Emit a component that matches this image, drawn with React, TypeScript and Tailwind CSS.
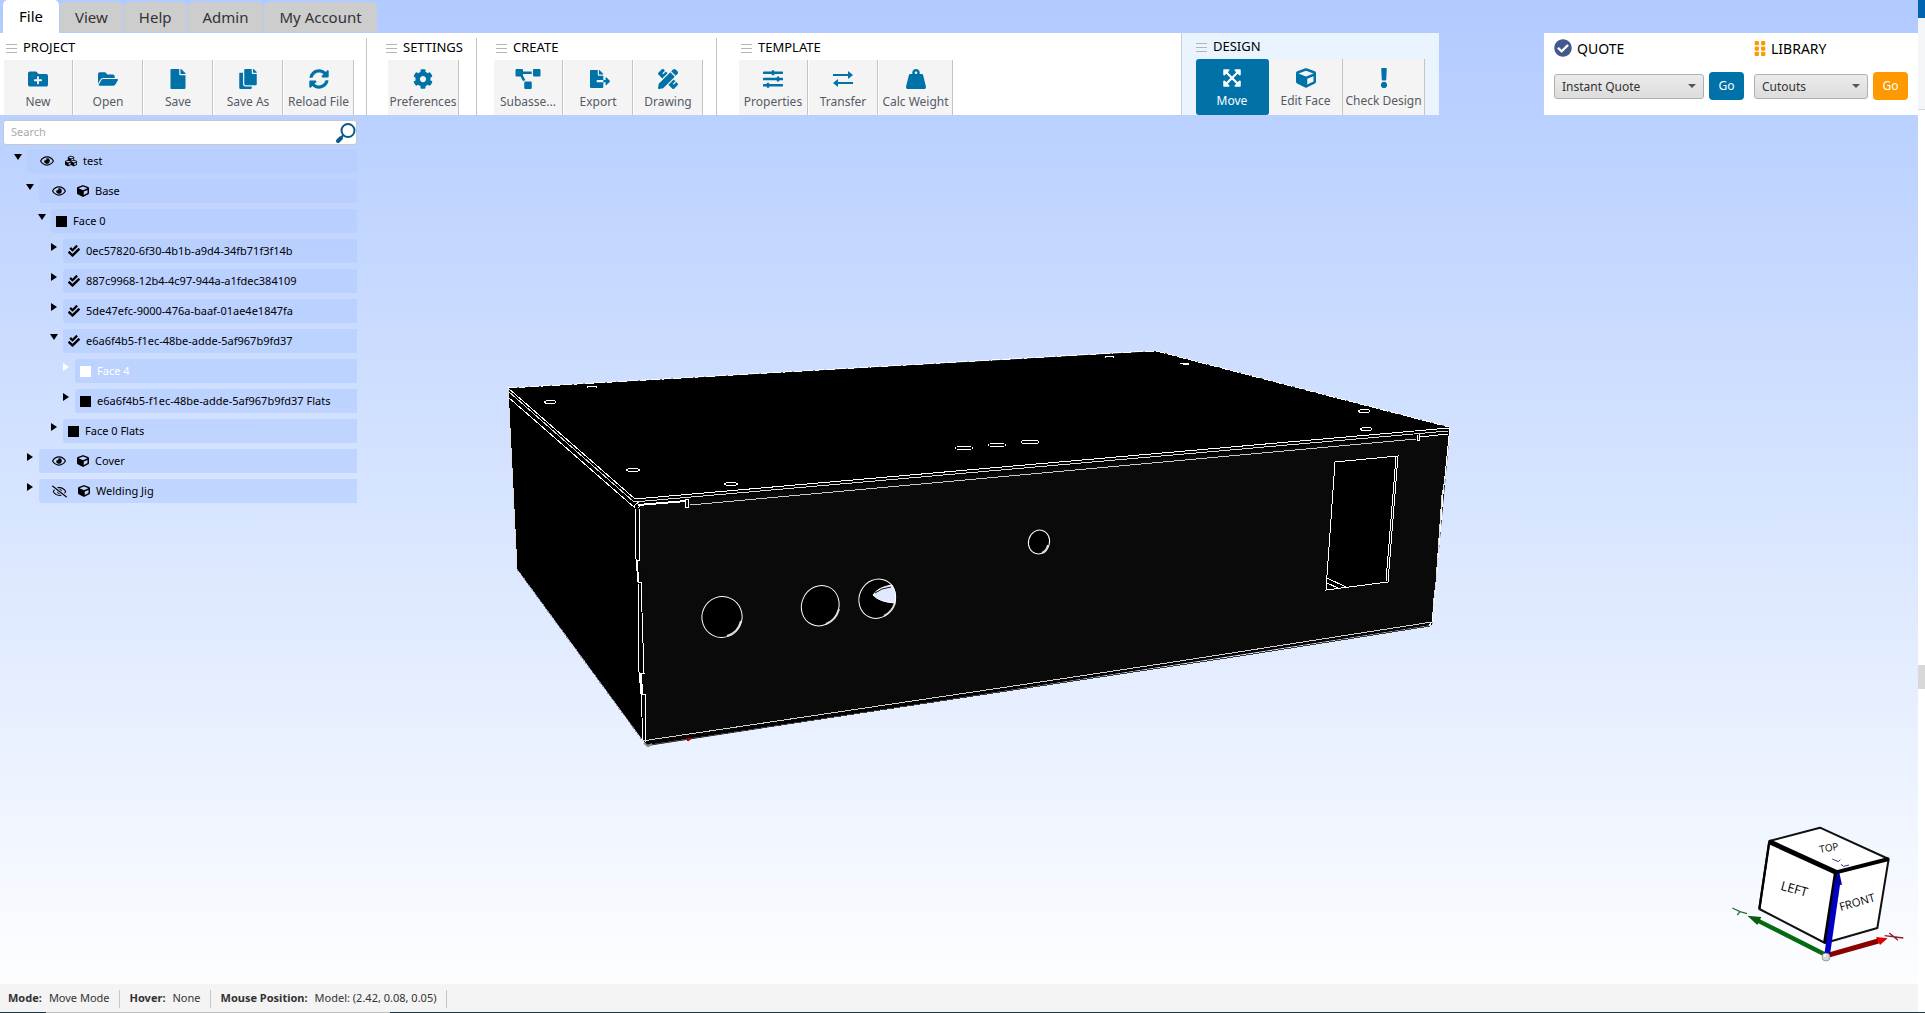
import { useState } from 'react';
import type { ReactNode } from 'react';
import type { IconType } from 'react-icons';
import {
  FaFolderPlus, FaFolderOpen, FaFile, FaCopy, FaSyncAlt, FaCog, FaProjectDiagram, FaFileExport,
  FaPencilRuler, FaSlidersH, FaWeightHanging, FaExpandArrowsAlt, FaCube, FaCubes, FaExclamation,
  FaRegEye, FaRegEyeSlash, FaSquareFull, FaCheckDouble, FaCheckCircle, FaGripVertical
} from 'react-icons/fa';

type Tool = { label: string; icon: ReactNode; wide?: string };

type Node = {
  id: number;
  label: string;
  indent: string;
  open?: boolean;
  eye?: 'on' | 'off';
  icon: IconType;
  selected?: boolean;
};

const TABS = ['File', 'View', 'Help', 'Admin', 'My Account'];

function TransferIcon() {
  return (
    <svg viewBox="0 0 20 20" className="size-5" fill="none" stroke="currentColor" strokeWidth="2">
      <path d="M0 6h17M20 14H3" />
      <path d="M15 2l5 4-5 4zM5 10l-5 4 5 4z" fill="currentColor" stroke="none" />
    </svg>
  );
}

const PROJECT: Tool[] = [
  { label: 'New', icon: <FaFolderPlus /> },
  { label: 'Open', icon: <FaFolderOpen /> },
  { label: 'Save', icon: <FaFile /> },
  { label: 'Save As', icon: <FaCopy /> },
  { label: 'Reload File', icon: <FaSyncAlt />, wide: 'w-[70px]' },
];

const SETTINGS: Tool[] = [
  { label: 'Preferences', icon: <FaCog />, wide: 'w-[71px]' },
];

const CREATE: Tool[] = [
  { label: 'Subasse...', icon: <FaProjectDiagram className="w-[26px]" /> },
  { label: 'Export', icon: <FaFileExport className="ml-1" /> },
  { label: 'Drawing', icon: <FaPencilRuler /> },
];

const TEMPLATE: Tool[] = [
  { label: 'Properties', icon: <FaSlidersH /> },
  { label: 'Transfer', icon: <TransferIcon /> },
  { label: 'Calc Weight', icon: <FaWeightHanging />, wide: 'w-[74px]' },
];

const NODES: Node[] = [
  { id: 1, label: 'test', indent: 'ml-0', open: true, eye: 'on', icon: FaCubes },
  { id: 2, label: 'Base', indent: 'ml-3', open: true, eye: 'on', icon: FaCube },
  { id: 3, label: 'Face 0', indent: 'ml-6', open: true, icon: FaSquareFull },
  { id: 4, label: '0ec57820-6f30-4b1b-a9d4-34fb71f3f14b', indent: 'ml-9', icon: FaCheckDouble },
  { id: 5, label: '887c9968-12b4-4c97-944a-a1fdec384109', indent: 'ml-9', icon: FaCheckDouble },
  { id: 6, label: '5de47efc-9000-476a-baaf-01ae4e1847fa', indent: 'ml-9', icon: FaCheckDouble },
  { id: 7, label: 'e6a6f4b5-f1ec-48be-adde-5af967b9fd37', indent: 'ml-9', open: true, icon: FaCheckDouble },
  { id: 8, label: 'Face 4', indent: 'ml-12', icon: FaSquareFull, selected: true },
  { id: 9, label: 'e6a6f4b5-f1ec-48be-adde-5af967b9fd37 Flats', indent: 'ml-12', icon: FaSquareFull },
  { id: 10, label: 'Face 0 Flats', indent: 'ml-9', icon: FaSquareFull },
  { id: 11, label: 'Cover', indent: 'ml-3', eye: 'on', icon: FaCube },
  { id: 12, label: 'Welding Jig', indent: 'ml-3', eye: 'off', icon: FaCube },
];

function GroupTitle({ children }: { children: string }) {
  return (
    <h2 className="flex h-[26px] items-center gap-[6px] pt-[2px] pl-[2px] text-[13px] text-black">
      <svg viewBox="0 0 11 9" className="h-[9px] w-[11px]" stroke="#b5b5b5" strokeWidth="1" shapeRendering="crispEdges">
        <path d="M0 .5h11M0 4.5h11M0 8.5h11" />
      </svg>
      {children}
    </h2>
  );
}

function ToolButton({ tool }: { tool: Tool }) {
  return (
    <button
      type="button"
      className={`${tool.wide || 'w-[69px]'} flex h-[55px] flex-col items-center border-r border-[#c4c4c4] bg-[#f4f4f4] pt-[9px]`}
    >
      <span className="flex h-5 items-center text-[20px] text-[#0072a8]">{tool.icon}</span>
      <span className="mt-[4px] text-[12px] leading-[18px] whitespace-nowrap text-[#545b66]">{tool.label}</span>
    </button>
  );
}

function Group({ title, tools, className, row = '' }: { title: string; tools: Tool[]; className: string; row?: string }) {
  return (
    <section className={`pt-px ${className}`}>
      <GroupTitle>{title}</GroupTitle>
      <div className={`flex gap-px ${row}`}>
        {tools.map((tool) => <ToolButton key={tool.label} tool={tool} />)}
      </div>
    </section>
  );
}

function Separator() {
  return <div className="mt-[5px] w-px shrink-0 bg-[#c4c4c4]" />;
}

function DesignGroup() {
  const [mode, setMode] = useState('Move');
  const tools = [
    { label: 'Move', icon: <FaExpandArrowsAlt />, width: 'w-[73px]' },
    { label: 'Edit Face', icon: <FaCube />, width: 'w-[74px]' },
    { label: 'Check Design', icon: <FaExclamation />, width: 'w-[82px]' },
  ];

  return (
    <section className="w-[258px] shrink-0 border-l border-[#c9ced6] bg-[#e9f4ff] pl-[14px]">
      <div className="-ml-[2px]"><GroupTitle>DESIGN</GroupTitle></div>
      <div className="flex">
        {tools.map(({ label, icon, width }) => {
          const active = label === mode;
          return (
            <button
              key={label}
              type="button"
              onClick={() => setMode(label)}
              className={`${width} flex h-14 flex-col items-center border-r pt-[9px] ${active ? 'rounded-[3px] border-[#0072a8] bg-[#0072a8] text-white' : 'border-[#c4c4c4] bg-[#f4f4f4] text-[#0072a8]'}`}
            >
              <span className="flex h-5 items-center text-[20px]">{icon}</span>
              <span className={`mt-[4px] text-[12px] leading-[18px] whitespace-nowrap ${active ? 'text-white' : 'text-[#545b66]'}`}>{label}</span>
            </button>
          );
        })}
      </div>
    </section>
  );
}

function Picker({ id, title, icon, option, width, button }: {
  id: string; title: string; icon: ReactNode; option: string; width: string; button: string;
}) {
  return (
    <div className="pt-[5px]">
      <label htmlFor={id} className="flex h-5 items-center gap-[5px] text-[14px] text-black">{icon}{title}</label>
      <div className="mt-[14px] flex items-center gap-[5px]">
        <div className="relative">
          <select
            id={id}
            className={`${width} h-[25px] appearance-none rounded-[3px] border border-[#b0b0b0] bg-linear-to-b from-[#ececec] to-[#dcdcdc] pl-[7px] text-[12px] text-[#333]`}
          >
            <option>{option}</option>
          </select>
          <span className="pointer-events-none absolute top-[11px] right-[8px] border-x-4 border-t-4 border-x-transparent border-t-[#555]" />
        </div>
        <button type="button" className={`${button} h-7 w-[35px] rounded-[4px] text-[12px] text-white`}>Go</button>
      </div>
    </div>
  );
}

function TreeRow({ node }: { node: Node }) {
  const Icon = node.icon;
  const isFace = Icon === FaSquareFull;
  return (
    <li className={`${node.indent} flex h-[30px] items-start ${node.selected ? 'text-white' : 'text-black'}`}>
      <button type="button" aria-label={`Toggle ${node.label}`} className="flex h-3 w-[13px] shrink-0 items-center pt-[3px]">
        {node.open ? (
          <svg viewBox="0 0 8 6" className="h-[6px] w-2" fill="currentColor"><path d="M0 0h8L4 6z" /></svg>
        ) : (
          <svg viewBox="0 0 6 8" className="ml-px h-2 w-[6px]" fill="currentColor"><path d="M0 0v8l6-4z" /></svg>
        )}
      </button>
      <div className={`flex h-6 grow items-center gap-[6px] rounded-l-[3px] bg-[#b4ccff]/65 text-[11px] whitespace-nowrap ${node.eye ? 'pl-[13px]' : 'pl-[5px]'}`}>
        {node.eye && (
          <button type="button" aria-label={`Visibility of ${node.label}`} className="mr-[5px]">
            {node.eye === 'on' ? <FaRegEye className="size-[14px]" /> : <FaRegEyeSlash className="size-[15px]" />}
          </button>
        )}
        <Icon className={isFace ? 'size-[11px]' : 'size-3'} />
        <span>{node.label}</span>
      </div>
    </li>
  );
}

function Sidebar() {
  return (
    <aside className="w-[357px] shrink-0 pt-[5px]">
      <div className="ml-[3px] flex h-[25px] items-center rounded-[3px] border border-[#c8c8c8] bg-white pl-[7px]">
        <input type="text" aria-label="Search" placeholder="Search" className="min-w-0 grow text-[11px] outline-none placeholder:text-[#aaa]" />
        <button type="button" aria-label="Find">
          <svg viewBox="1 0 21 22" className="h-[22px] w-[21px]" fill="none" stroke="#0a5a8c">
            <circle cx="14" cy="8.500" r="6.500" strokeWidth="2" />
            <path d="M9.500 13l-2 2" strokeWidth="2" />
            <path d="M7 16l-3 3" strokeWidth="4" strokeLinecap="round" />
          </svg>
        </button>
      </div>
      <ul className="mt-1 pl-[14px]">
        {NODES.map((node) => <TreeRow key={node.id} node={node} />)}
      </ul>
    </aside>
  );
}

function Model() {
  return (
    <svg viewBox="500 340 960 420" className="mt-[225px] ml-[143px] h-[420px] w-[960px] shrink-0" fill="none" stroke="#fff" strokeWidth="1" role="img" aria-label="Enclosure model">
      {/* solid faces */}
      <path d="M508 388L1157 351L1449 427L1449 440L1432 625L647 746L517 569Z" fill="#000" stroke="none" />
      <path d="M638 504L1449 434L1432 624L645 742Z" fill="#0a0a0a" stroke="none" />

      {/* cover edges */}
      <g shapeRendering="crispEdges">
        <path d="M508 388L1148 351L1160 352L1449 427" strokeDasharray="9 2" />
        <path d="M508 388L635 499L1449 428" />
        <path d="M508 391L634 502L1448 431" stroke="#d8d8d8" />
        <path d="M508 397L635 508" />
        <path d="M690 505L1416 439" stroke="#c8c8c8" />
        <path d="M638 505L686 501" strokeWidth="2" />
        <path d="M685 499h3v8h-3z" />
        <path d="M1417 435v5h2v-6M1419 437L1448 434" />
        <path d="M508 388L508.500 397L517 569" stroke="#ddd" />
        <path d="M517 569L645 744" stroke="#8d94a3" strokeDasharray="2 2" />
      </g>

      {/* front edges */}
      <g shapeRendering="crispEdges">
        <path d="M634 508L635 505L639 502M638 508L642 504" />
        <path d="M635 508L636 559L638 582L639 672L641 693L643 741L648 746" />
        <path d="M639 508L640 560H637L638 582H641L644 673H640L641 694H645L646 742" />
        <path d="M637 560L638 582M641 673L642 694" strokeWidth="2" />
        <path d="M642 741L1000 688L1180 661L1432 622" stroke="#d0d0d0" />
        <path d="M648 745L1000 692L1240 656L1430 626" stroke="#3c3c3c" />
        <path d="M1449 428V436L1445 476L1443 494L1436 584L1432 622L1429 626" />
        <path d="M1446 474L1442 495L1436 582L1433 606" stroke="#ddd" />
      </g>
      <path d="M644 743l4 3 4-2" stroke="#888" strokeWidth="2" />
      <path d="M686 739l6-1-4 3z" fill="#a00" stroke="#a00" />

      {/* cover holes */}
      <g shapeRendering="crispEdges">
        <ellipse cx="550" cy="402" rx="5.500" ry="1.500" />
        <path d="M587 388v-2h9v2" />
        <ellipse cx="633" cy="470" rx="6.500" ry="1.500" />
        <ellipse cx="731" cy="484" rx="6.500" ry="1.500" />
        <ellipse cx="964" cy="448" rx="9" ry="1.500" />
        <ellipse cx="997" cy="445" rx="9" ry="1.500" />
        <ellipse cx="1030" cy="442" rx="9" ry="2" />
        <ellipse cx="1364" cy="411" rx="5.500" ry="1.500" />
        <ellipse cx="1366" cy="429" rx="5.500" ry="1.500" />
        <path d="M1105 358v-2h8v2M1180 363h6l3 1h-6" />
      </g>

      {/* front cutouts */}
      <g fill="#000">
        <ellipse cx="722" cy="617" rx="20" ry="20.500" transform="rotate(25 722 617)" />
        <ellipse cx="820.500" cy="605.500" rx="18.500" ry="20.500" transform="rotate(25 820 605)" />
        <ellipse cx="877.500" cy="598.500" rx="18" ry="20" transform="rotate(25 877 598)" />
        <ellipse cx="1039" cy="542" rx="10.500" ry="12" transform="rotate(15 1039 542)" />
      </g>
      <path d="M741 621Q738 633 727 636M839 609Q836 620 826 624M895 603Q892 612 884 616M1048 545Q1047 551 1042 553" strokeWidth="2" stroke="#ddd" />
      <path d="M873 595Q878 587 892 585Q897 593 895 603Q879 602 873 595Z" fill="#e0e9ff" />
      <path d="M875 593Q881 588 891 587" stroke="#111" />
      <path d="M1335 462L1398 456L1388 582L1326 590Z" fill="#000" shapeRendering="crispEdges" />
      <path d="M1396 457L1386 581M1327 578L1346 587M1327 583L1338 588M1326 590L1388 582" shapeRendering="crispEdges" />
    </svg>
  );
}

function ViewCube() {
  return (
    <svg viewBox="90 70 531 420" className="mr-[11px] mb-[21px] h-[140px] w-[177px] self-end" strokeLinejoin="round" role="img" aria-label="View cube">
      <path d="M208 124L360 84L566 178L532 385L375 430L178 328Z" fill="#fff" stroke="#111" strokeWidth="6" />
      <path d="M208 126L408 218" stroke="#000" strokeWidth="15" />
      <path d="M408 218L566 178" stroke="#000" strokeWidth="12" />
      <path d="M408 218L375 430" stroke="#000" strokeWidth="12" />
      <path d="M208 126L178 328" stroke="#000" strokeWidth="7" />
      <g fill="#000" fontFamily="Open Sans" fontSize="38">
        <text x="240" y="270" transform="rotate(15 240 270)">LEFT</text>
        <text x="422" y="334" fontSize="34" transform="rotate(-16 422 334)">FRONT</text>
        <text x="360" y="160" fontSize="30" transform="rotate(-10 360 160)">TOP</text>
      </g>
      <path d="M397 178l18 8 6-6M423 194l8 6 16-4" fill="none" stroke="#33338f" strokeWidth="3" />
      <path d="M378 466L172 362" stroke="#086a10" strokeWidth="13" />
      <path d="M142 348L184 352L172 376Z" fill="#0b5c12" />
      <path d="M97 325L120 336L141 342M120 336L112 346" fill="none" stroke="#2d6e33" strokeWidth="4" />
      <path d="M380 468L535 424" stroke="#8b0000" strokeWidth="15" />
      <path d="M563 416L528 412L540 436Z" fill="#e00000" />
      <path d="M554 408L610 415M568 400L594 422" stroke="#8e1b22" strokeWidth="4" />
      <path d="M381 468L412 252" stroke="#0000c4" strokeWidth="17" />
      <path d="M417 214L400 252L426 256Z" fill="#0000a0" />
      <circle cx="378" cy="472" r="12" fill="#d9d9d9" stroke="#777" strokeWidth="2" />
      <circle cx="374" cy="468" r="4" fill="#fff" />
    </svg>
  );
}

function StatusItem({ name, value }: { name: string; value: string }) {
  return (
    <div className="flex h-[18px] items-center gap-[7px] border-r border-[#c6c6c6] pr-[9px]">
      <span className="font-bold">{name}:</span>
      <span>{value}</span>
    </div>
  );
}

export default function App() {
  const [tab, setTab] = useState('File');

  return (
    <div className="flex h-screen flex-col overflow-hidden font-['Noto_Sans',sans-serif]">
      <div className="flex min-h-0 grow">
        <div className="flex min-w-0 grow flex-col bg-linear-to-b from-[#b1caff] to-white">
          <nav className="flex h-[33px] shrink-0 items-start gap-px pl-[3px]">
            {TABS.map((name) => (
              <button
                key={name}
                type="button"
                onClick={() => setTab(name)}
                className={`rounded-t-[5px] text-[15px] ${name === tab ? 'h-[33px] bg-white px-4 text-black' : 'mt-[2px] h-[30px] bg-[#cdcdcd] px-[15px] text-[#333]'}`}
              >
                {name}
              </button>
            ))}
          </nav>

          <header className="flex h-[82px] shrink-0">
            <div className="flex grow bg-white">
              <Group title="PROJECT" tools={PROJECT} className="w-[366px] pl-1" />
              <Separator />
              <Group title="SETTINGS" tools={SETTINGS} className="w-[109px] pl-[17px]" row="pl-1" />
              <Separator />
              <Group title="CREATE" tools={CREATE} className="w-[239px] pl-[17px]" />
              <Separator />
              <Group title="TEMPLATE" tools={TEMPLATE} className="pl-[22px]" />
            </div>
            <DesignGroup />
            <div className="w-[105px] shrink-0" />
            <div className="flex w-[374px] shrink-0 gap-[10px] bg-white pl-[10px]">
              <Picker id="quote" title="QUOTE" icon={<FaCheckCircle className="size-[18px] text-[#43598b]" />} option="Instant Quote" width="w-[150px]" button="bg-[#0072a8]" />
              <Picker id="library" title="LIBRARY" icon={<FaGripVertical className="h-[17px] w-3 text-[#ff9900]" />} option="Cutouts" width="w-[114px]" button="bg-[#ff9900]" />
            </div>
          </header>

          <main className="flex min-h-0 grow">
            <Sidebar />
            <section className="flex min-w-0 grow flex-col justify-between">
              <Model />
              <ViewCube />
            </section>
          </main>

          <footer className="flex h-7 shrink-0 items-center gap-[10px] bg-[#f4f4f4] pt-px pl-2 text-[11px] text-[#333]">
            <StatusItem name="Mode" value="Move Mode" />
            <StatusItem name="Hover" value="None" />
            <StatusItem name="Mouse Position" value="Model: (2.42, 0.08, 0.05)" />
          </footer>
        </div>

        {/* edge of the window behind */}
        <div className="flex w-[7px] shrink-0 flex-col bg-white">
          <div className="h-[18px] bg-[#0063b1]" />
          <div className="h-[92px] border-b border-[#d5d8dc] bg-[#f4f5f8]" />
          <div className="mt-[555px] h-6 bg-[#d8d8d8]" />
        </div>
      </div>
      <div className="flex h-px shrink-0 bg-[#1c3644]">
        <div className="ml-[46px] w-[344px] bg-[#bdbdbd]" />
      </div>
    </div>
  );
}
